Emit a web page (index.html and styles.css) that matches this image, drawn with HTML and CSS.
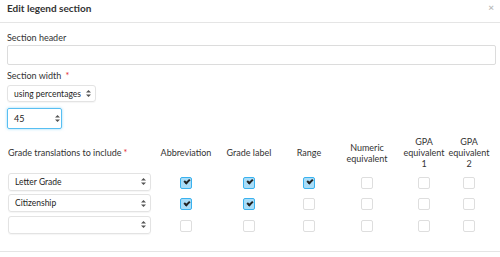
FILE: index.html
```html
<!DOCTYPE html>
<html lang="en">
<head>
    <meta charset="UTF-8">
    <meta name="viewport" content="width=device-width, initial-scale=1.0">
    <title>Edit legend section</title>
    <link rel="stylesheet" href="styles.css">
</head>
<body>
    <div class="modal">
        <div class="modal-header">
            <h4>Edit legend section</h4>
            <span class="close">&times;</span>
        </div>
        <div class="modal-body">
            <label class="field-label">Section header</label>
            <input type="text" class="text-input">

            <label class="field-label spaced">Section width <span class="req">*</span></label>
            <div class="select-box width-select">
                <span>using percentages</span>
                <svg class="arrows" width="5" height="7" viewBox="0 0 5 7"><path d="M2.5 0L5 2.6H0z M2.5 7L0 4.4h5z" fill="#555"/></svg>
            </div>
            <div class="number-box">
                <span>45</span>
                <svg class="arrows" width="5" height="7" viewBox="0 0 5 7"><path d="M2.5 0L5 2.6H0z M2.5 7L0 4.4h5z" fill="#555"/></svg>
            </div>

            <div class="grid">
                <div class="head first">Grade translations to include <span class="req">*</span></div>
                <div class="head">Abbreviation</div>
                <div class="head">Grade label</div>
                <div class="head">Range</div>
                <div class="head">Numeric<br>equivalent</div>
                <div class="head">GPA<br>equivalent<br>1</div>
                <div class="head">GPA<br>equivalent<br>2</div>

                <div class="select-box row-select"><span>Letter Grade</span><svg class="arrows" width="5" height="7" viewBox="0 0 5 7"><path d="M2.5 0L5 2.6H0z M2.5 7L0 4.4h5z" fill="#555"/></svg></div>
                <div class="cell"><span class="cb on"></span></div>
                <div class="cell"><span class="cb on"></span></div>
                <div class="cell"><span class="cb on"></span></div>
                <div class="cell"><span class="cb"></span></div>
                <div class="cell"><span class="cb"></span></div>
                <div class="cell"><span class="cb"></span></div>

                <div class="select-box row-select"><span>Citizenship</span><svg class="arrows" width="5" height="7" viewBox="0 0 5 7"><path d="M2.5 0L5 2.6H0z M2.5 7L0 4.4h5z" fill="#555"/></svg></div>
                <div class="cell"><span class="cb on"></span></div>
                <div class="cell"><span class="cb on"></span></div>
                <div class="cell"><span class="cb"></span></div>
                <div class="cell"><span class="cb"></span></div>
                <div class="cell"><span class="cb"></span></div>
                <div class="cell"><span class="cb"></span></div>

                <div class="select-box row-select"><span></span><svg class="arrows" width="5" height="7" viewBox="0 0 5 7"><path d="M2.5 0L5 2.6H0z M2.5 7L0 4.4h5z" fill="#555"/></svg></div>
                <div class="cell"><span class="cb"></span></div>
                <div class="cell"><span class="cb"></span></div>
                <div class="cell"><span class="cb"></span></div>
                <div class="cell"><span class="cb"></span></div>
                <div class="cell"><span class="cb"></span></div>
                <div class="cell"><span class="cb"></span></div>
            </div>
        </div>
        <div class="modal-footer"></div>
    </div>
</body>
</html>
```

FILE: styles.css
```css
body {
    margin: 0;
    font-family: Lato, "Open Sans", sans-serif;
    color: #333;
    background: #fff;
    font-size: 9px;
}
.modal {
    width: 500px;
}
.modal-header {
    height: 23px;
    border-bottom: 1px solid #e5e5e5;
    display: flex;
    align-items: center;
    justify-content: space-between;
    padding: 0 7px;
    box-sizing: border-box;
}
.modal-header h4 {
    margin: 0;
    font-size: 10px;
    font-weight: bold;
    margin-top: -6px;
}
.close {
    color: #bbb;
    font-size: 10px;
    font-weight: bold;
    margin-top: -8px;
    margin-right: -1px;
}
.modal-body {
    padding: 9px 4px 0 7px;
}
.field-label {
    display: block;
    line-height: 12px;
    margin-bottom: 1px;
}
.field-label.spaced {
    margin-top: 5px;
    margin-bottom: 3px;
}
.req {
    color: #e4262a;
    margin-left: 2px;
}
.text-input {
    display: block;
    width: 100%;
    height: 20px;
    box-sizing: border-box;
    border: 1px solid #dcdcdc;
    border-radius: 2px;
    margin: 0;
}
.select-box {
    position: relative;
    box-sizing: border-box;
    border: 1px solid #e3e3e3;
    border-radius: 3px;
    display: flex;
    align-items: center;
    padding-left: 6px;
    font-size: 8.5px;
    color: #1e1e1e;
    box-shadow: 0 1px 1px rgba(0, 0, 0, 0.04);
}
.arrows {
    position: absolute;
    right: 4px;
    top: 50%;
    margin-top: -3.5px;
}
.width-select {
    width: 89px;
    height: 17px;
}
.number-box {
    position: relative;
    width: 55px;
    height: 21px;
    box-sizing: border-box;
    margin-top: 6px;
    border: 1px solid #58bff2;
    border-radius: 2px;
    box-shadow: 0 0 3px rgba(88, 191, 242, 0.6);
    display: flex;
    align-items: center;
    padding-left: 6px;
    color: #222;
}
.number-box .arrows {
    right: auto;
    left: 47px;
}
.grid {
    display: grid;
    grid-template-columns: 153px 52px 74px 46px 70px 44px 46px;
    grid-template-rows: 33px 18px 18px 18px;
    row-gap: 3.5px;
    margin-top: 7px;
}
.grid .head {
    display: flex;
    align-items: center;
    justify-content: center;
    text-align: center;
    line-height: 11px;
    white-space: nowrap;
}
.grid .head.first {
    justify-content: flex-start;
    padding-left: 1px;
}
.row-select {
    width: 143px;
    height: 18px;
    margin-left: 1px;
}
.cell {
    display: flex;
    align-items: center;
    justify-content: center;
    padding-top: 2px;
}
.cb {
    width: 12px;
    height: 12px;
    box-sizing: border-box;
    border: 1px solid #dedede;
    border-radius: 2px;
    position: relative;
}
.cb.on {
    background: #a9ddf8;
    border: 1.5px solid #3ab2ef;
}
.cb.on::after {
    content: "";
    position: absolute;
    left: 2.5px;
    top: 1.5px;
    width: 4px;
    height: 2px;
    border-left: 2px solid #222;
    border-bottom: 2px solid #222;
    transform: rotate(-45deg);
}
.modal-footer {
    border-top: 1px solid #e5e5e5;
    margin-top: 17px;
    height: 6px;
}
```
